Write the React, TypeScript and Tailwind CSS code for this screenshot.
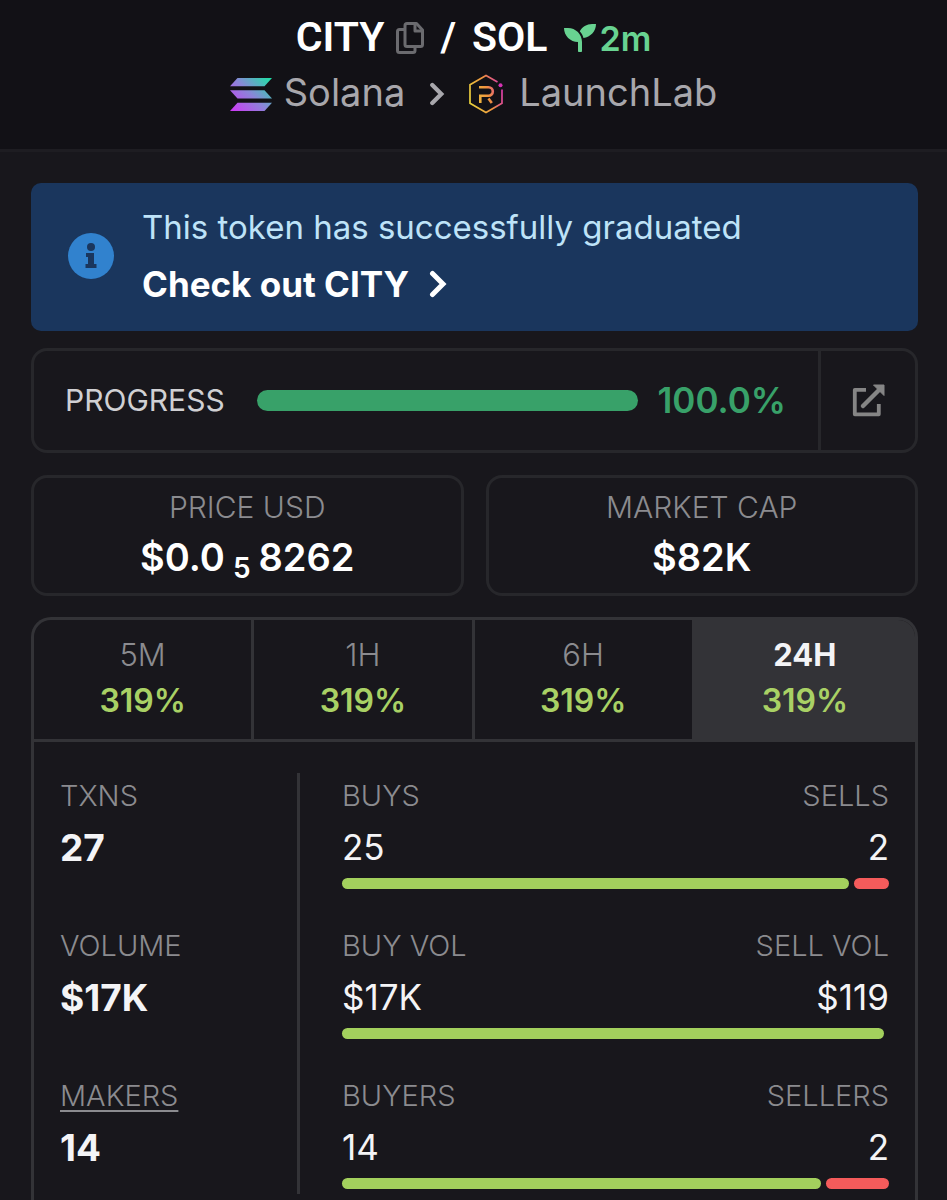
import { FaSeedling } from "react-icons/fa";

const panelBorder = "border-[#333337]";
const cardBorder = "border-[#27272b]";

function CopyIcon() {
  return (
    <svg viewBox="0 0 28 32" className="h-8 w-7 shrink-0" fill="none" stroke="#6b6b6f" strokeWidth="3" strokeLinejoin="round">
      <path d="M11 1.500h9.500L26.500 8v14.500a2 2 0 0 1-2 2H11a2 2 0 0 1-2-2v-19a2 2 0 0 1 2-2z" />
      <path d="M19 1.500V9h7.500" />
      <path d="M9 7.500H3.500a2 2 0 0 0-2 2v19a2 2 0 0 0 2 2h13.500a2 2 0 0 0 2-2v-4" />
    </svg>
  );
}

function SolanaIcon() {
  return (
    <svg viewBox="0 0 42 33" className="h-[33px] w-[42px] shrink-0">
      <defs>
        <linearGradient id="solana" x1="4" y1="34" x2="38" y2="-2" gradientUnits="userSpaceOnUse">
          <stop offset="0" stopColor="#cb3cf4" />
          <stop offset="0.5" stopColor="#8a86d8" />
          <stop offset="1" stopColor="#1fe0a6" />
        </linearGradient>
      </defs>
      <g fill="url(#solana)">
        <path d="M7.500 0H42l-7.500 8.300H0z" />
        <path d="M0 12.300h34.500L42 20.600H7.500z" />
        <path d="M7.500 24.700H42L34.500 33H0z" />
      </g>
    </svg>
  );
}

function RaydiumIcon() {
  return (
    <svg viewBox="0 0 34 40" className="h-10 w-[34px] shrink-0" fill="none" stroke="url(#raydium)">
      <defs>
        <linearGradient id="raydium" x1="0" y1="24" x2="34" y2="14" gradientUnits="userSpaceOnUse">
          <stop offset="0" stopColor="#e8d13c" />
          <stop offset="0.55" stopColor="#f0913f" />
          <stop offset="1" stopColor="#d633b4" />
        </linearGradient>
      </defs>
      <path d="M28.500 8L17 1.500 1 10.700v18.600l16 9.200 16-9.200V15.500" strokeWidth="1.700" />
      <path d="M10 13.200h9.500a4.200 4.200 0 0 1 0 8.600H11.300V29" strokeWidth="2.600" />
      <path d="M19.500 24.500l3.300 4.500" strokeWidth="2.600" />
      <circle cx="31.500" cy="11.300" r="2" fill="#d633b4" stroke="none" />
    </svg>
  );
}

function Chevron({ className }: { className: string }) {
  return (
    <svg viewBox="0 0 18 28" className={className} fill="none" stroke="currentColor" strokeWidth="5" strokeLinecap="round" strokeLinejoin="miter">
      <path d="M3.500 3.500L14 14 3.500 24.500" />
    </svg>
  );
}

function InfoIcon() {
  return (
    <svg viewBox="0 0 46 46" className="size-[46px] shrink-0">
      <circle cx="23" cy="23" r="23" fill="#3182ce" />
      <g fill="#1a365d">
        <circle cx="23" cy="14" r="4" />
        <path d="M18 20h8v11h2.500v4h-11v-4H20v-7h-2z" />
      </g>
    </svg>
  );
}

function ExternalIcon() {
  return (
    <svg viewBox="0 0 33 33" className="size-[33px]" fill="none" stroke="#858585" strokeLinejoin="round">
      <path d="M14 5.800H2.800v24.500h24V20" strokeWidth="3.800" />
      <path d="M11 22L27 6" strokeWidth="4.500" strokeLinecap="round" />
      <path d="M21.500 1H32v10.500z" fill="#858585" strokeWidth="1" />
    </svg>
  );
}

const prices = [
  { period: "5M", change: "319%" },
  { period: "1H", change: "319%" },
  { period: "6H", change: "319%" },
  { period: "24H", change: "319%", active: true },
];

const totals = [
  { label: "TXNS", value: "27" },
  { label: "VOLUME", value: "$17K" },
  { label: "MAKERS", value: "14", underlined: true },
];

const splits = [
  { left: "BUYS", leftValue: "25", right: "SELLS", rightValue: "2", share: 93.5 },
  { left: "BUY VOL", leftValue: "$17K", right: "SELL VOL", rightValue: "$119", share: 100 },
  { left: "BUYERS", leftValue: "14", right: "SELLERS", rightValue: "2", share: 88.3 },
];

export default function App() {
  return (
    <div className="flex min-h-screen flex-col bg-[#18171c] font-['Inter','Liberation_Sans',sans-serif] text-[#f4f4f6]">
      <header className="flex h-[152px] flex-col items-center border-b-3 border-[#1e1d22] bg-[#121116] pt-3">
        <h1 className="flex h-[52px] items-center font-['Roboto','Liberation_Sans',sans-serif] text-[41px] font-semibold text-white">
          <span>CITY</span>
          <button type="button" aria-label="Copy address" className="ml-3 flex">
            <CopyIcon />
          </button>
          <span className="ml-4">/</span>
          <span className="ml-4">SOL</span>
          <FaSeedling className="ml-4 size-8 text-[#68d391]" />
          <span className="ml-1 font-['Inter','Liberation_Sans',sans-serif] text-[34px] font-semibold text-[#68d391]">2m</span>
        </h1>
        <nav className="flex h-[60px] items-center text-[38px] text-[#a8a7ac]">
          <SolanaIcon />
          <a href="#solana" className="ml-3 pb-[3px] leading-[53px]">Solana</a>
          <Chevron className="ml-6 h-6 w-4" />
          <span className="ml-6 flex">
            <RaydiumIcon />
          </span>
          <a href="#launchlab" className="ml-4 pb-[3px] leading-[53px]">LaunchLab</a>
        </nav>
      </header>

      <main className="flex flex-1 flex-col pt-[31px] pr-[29px] pl-[31px]">
        <section className="flex h-[148px] items-center rounded-[10px] bg-[#1a365d] pb-[2px] pl-[37px]">
          <InfoIcon />
          <div className="ml-7">
            <p className="text-[33px] leading-[56px] text-[#bee3f8]">This token has successfully graduated</p>
            <a href="#city" className="flex items-center text-[35px] leading-[58px] font-bold text-white">
              Check out CITY
              <Chevron className="ml-5 h-7 w-[18px]" />
            </a>
          </div>
        </section>

        <section className={`mt-[17px] flex h-[105px] rounded-2xl border-3 ${cardBorder}`}>
          <div className="flex flex-1 items-center pr-8 pl-[31px]">
            <span className="text-[30px] text-[#d0d0d3]">PROGRESS</span>
            <div role="progressbar" aria-label="Progress" aria-valuenow={100} className="mr-5 ml-8 h-[21px] flex-1 rounded-full bg-[#38a169]" />
            <span className="text-[35px] font-semibold text-[#38a169]">100.0%</span>
          </div>
          <a href="#open" aria-label="Open in new tab" className={`flex w-[97px] items-center justify-center border-l-3 ${cardBorder}`}>
            <ExternalIcon />
          </a>
        </section>

        <section className="mt-[22px] grid grid-cols-2 gap-[22px] text-center">
          <div className={`h-[121px] rounded-2xl border-3 pt-[6px] ${cardBorder}`}>
            <h2 className="text-[30px] leading-[46px] font-light text-[#8b8b8f]">PRICE USD</h2>
            <p className="flex items-baseline justify-center text-[38px] leading-[54px] font-semibold text-white">
              $0.0
              <sub className="mx-2 text-[28px] leading-none">5</sub>
              8262
            </p>
          </div>
          <div className={`h-[121px] rounded-2xl border-3 pt-[6px] ${cardBorder}`}>
            <h2 className="text-[30px] leading-[46px] font-light text-[#8b8b8f]">MARKET CAP</h2>
            <p className="text-[38px] leading-[54px] font-semibold text-white">$82K</p>
          </div>
        </section>

        <section className={`mt-[21px] flex flex-1 flex-col rounded-t-[20px] border-3 border-b-0 ${panelBorder}`}>
          <div className={`grid h-[122px] shrink-0 grid-cols-4 border-b-3 ${panelBorder}`}>
            {prices.map((p) => (
              <button
                key={p.period}
                type="button"
                className={`flex flex-col items-center pt-[11px] ${panelBorder} ${p.active ? "rounded-tr-[17px] bg-[#333337]" : "border-r-3"}`}
              >
                <span className={`text-[31px] leading-[48px] ${p.active ? "font-bold" : "font-light text-[#8b8b8f]"}`}>{p.period}</span>
                <span className="text-[32px] leading-[44px] font-semibold text-[#a9d165]">{p.change}</span>
              </button>
            ))}
          </div>

          <div className="mt-[31px] flex pr-[26px] pl-[26px]">
            <div className={`flex w-[240px] shrink-0 flex-col gap-[34px] border-r-3 pb-[5px] ${panelBorder}`}>
              {totals.map((t) => (
                <div key={t.label} className="h-[116px]">
                  <h3
                    className={`text-[29px] leading-[46px] font-light text-[#8b8b8f] ${
                      t.underlined ? "underline decoration-2 underline-offset-4" : ""
                    }`}
                  >
                    {t.label}
                  </h3>
                  <p className="text-[37px] leading-[58px] font-bold">{t.value}</p>
                </div>
              ))}
            </div>
            <div className="ml-[42px] flex flex-1 flex-col gap-[34px]">
              {splits.map((s) => (
                <div key={s.left}>
                  <div className="flex justify-between text-[29px] leading-[46px] font-light text-[#8b8b8f]">
                    <h3>{s.left}</h3>
                    <h3>{s.right}</h3>
                  </div>
                  <div className="flex justify-between text-[35px] leading-[56px]">
                    <span>{s.leftValue}</span>
                    <span>{s.rightValue}</span>
                  </div>
                  <div className="mt-[3px] flex h-[11px] gap-[5px]">
                    <div className="rounded-full bg-[#a3d05d]" style={{ flexGrow: s.share }} />
                    <div className="rounded-full bg-[#f45b5b]" style={{ flexGrow: 100 - s.share }} />
                  </div>
                </div>
              ))}
            </div>
          </div>
        </section>
      </main>
    </div>
  );
}
